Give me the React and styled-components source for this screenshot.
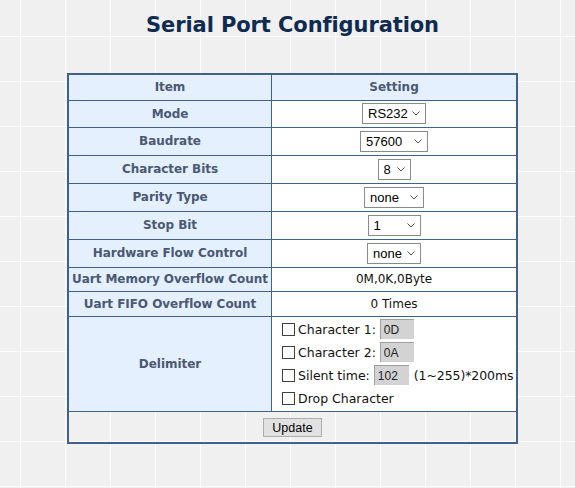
import React from "react";
import styled, { createGlobalStyle } from "styled-components";

const GlobalStyle = createGlobalStyle`
  html, body {
    margin: 0;
    padding: 0;
  }
  body {
    min-height: 488px;
    background-color: #f0f0f0;
    background-image:
      linear-gradient(to right, rgba(255, 255, 255, 0.85) 1px, transparent 1px),
      linear-gradient(to bottom, rgba(255, 255, 255, 0.85) 1px, transparent 1px);
    background-size: 45px 45px;
    background-position: 20px 36px;
    font-family: "DejaVu Sans", Verdana, sans-serif;
  }
`;

const Page = styled.div`
  width: 575px;
  box-sizing: border-box;
  padding: 11px 0 0 10px;
`;

const Title = styled.h1`
  margin: 0 0 34px;
  text-align: center;
  font-size: 21px;
  font-weight: bold;
  color: #0f2b50;
  line-height: 28px;
  letter-spacing: -0.1px;
`;

const Table = styled.table`
  width: 451px;
  margin: 0 auto;
  border-collapse: collapse;
  border: 2px solid #41618a;
`;

const Row = styled.tr`
  height: ${(p) => p.$h}px;
`;

const Label = styled.td`
  width: 202px;
  padding: 0;
  border: 1px solid #41618a;
  background: #e4f0fd;
  color: #4b5873;
  font-weight: bold;
  font-size: 12px;
  text-align: center;
  white-space: nowrap;
  letter-spacing: -0.05px;
`;

const Value = styled.td`
  padding: 0;
  border: 1px solid #41618a;
  background: ${(p) => (p.$head ? "#e4f0fd" : "#fff")};
  color: ${(p) => (p.$head ? "#4b5873" : "#111")};
  font-weight: ${(p) => (p.$head ? "bold" : "normal")};
  font-size: 12px;
  text-align: center;
  white-space: nowrap;
`;

const ButtonCell = styled.td`
  padding: 5px 0 0;
  border: 1px solid #41618a;
  text-align: center;
  vertical-align: top;
`;

const SelectWrap = styled.span`
  position: relative;
  display: inline-block;
  vertical-align: middle;
`;

const Select = styled.select`
  appearance: none;
  -webkit-appearance: none;
  width: ${(p) => p.$w}px;
  height: 21px;
  margin: 0;
  padding: 0 0 0 5px;
  border: 1px solid #8a8a8a;
  border-radius: 0;
  background: #fff;
  font-family: "Liberation Sans", Arial, sans-serif;
  font-size: 13px;
  color: #000;
  display: block;
`;

const Chevron = styled.svg`
  position: absolute;
  right: 6px;
  top: 8px;
  width: 8px;
  height: 5px;
  pointer-events: none;
`;

const Delims = styled.div`
  display: flex;
  flex-direction: column;
  gap: 2px;
  padding: 2px 0 2px 10px;
  text-align: left;
`;

const DelimLine = styled.label`
  display: flex;
  align-items: center;
  height: 21px;
  font-size: 12.5px;
  color: #111;
`;

const Check = styled.input`
  appearance: none;
  -webkit-appearance: none;
  width: 13px;
  height: 13px;
  margin: 0 3px 0 0;
  border: 1px solid #3f3f3f;
  background: #fff;
`;

const TextBox = styled.input`
  width: ${(p) => p.$w}px;
  height: 20px;
  box-sizing: border-box;
  margin-left: 4px;
  padding: 0 0 0 3px;
  border: none;
  border-top: 1px solid #a0a0a0;
  border-left: 1px solid #a0a0a0;
  background: #d3d3d3;
  font-family: "Liberation Sans", Arial, sans-serif;
  font-size: 12px;
  color: #222;
`;

const Hint = styled.span`
  margin-left: 5px;
  letter-spacing: -0.1px;
`;

const UpdateButton = styled.button`
  width: 59px;
  height: 19px;
  margin: 0;
  padding: 0;
  border: 1px solid #adadad;
  background: #e1e1e1;
  font-family: "Liberation Sans", Arial, sans-serif;
  font-size: 12.5px;
  color: #000;
`;

const Dropdown = ({ w, value, options }) => (
  <SelectWrap>
    <Select $w={w} defaultValue={value}>
      {options.map((o) => (
        <option key={o}>{o}</option>
      ))}
    </Select>
    <Chevron viewBox="0 0 8 5">
      <path d="M0.5 0.5 L4 4 L7.5 0.5" fill="none" stroke="#555" strokeWidth="1" />
    </Chevron>
  </SelectWrap>
);

const rows = [
  { label: "Mode", h: 27, w: 64, value: "RS232", options: ["RS232", "RS422", "RS485"] },
  { label: "Baudrate", h: 28, w: 68, value: "57600", options: ["9600", "19200", "38400", "57600", "115200"] },
  { label: "Character Bits", h: 28, w: 33, value: "8", options: ["7", "8"] },
  { label: "Parity Type", h: 28, w: 60, value: "none", options: ["none", "odd", "even"] },
  { label: "Stop Bit", h: 28, w: 53, value: "1", options: ["1", "2"] },
  { label: "Hardware Flow Control", h: 28, w: 54, value: "none", options: ["none", "rts/cts"] },
];

export default function App() {
  return (
    <>
      <GlobalStyle />
      <Page>
        <Title>Serial Port Configuration</Title>
        <Table>
          <tbody>
            <Row $h={26}>
              <Label>Item</Label>
              <Value $head>Setting</Value>
            </Row>
            {rows.map((r) => (
              <Row $h={r.h} key={r.label}>
                <Label>{r.label}</Label>
                <Value>
                  <Dropdown w={r.w} value={r.value} options={r.options} />
                </Value>
              </Row>
            ))}
            <Row $h={24}>
              <Label>Uart Memory Overflow Count</Label>
              <Value>0M,0K,0Byte</Value>
            </Row>
            <Row $h={25}>
              <Label>Uart FIFO Overflow Count</Label>
              <Value>0 Times</Value>
            </Row>
            <Row $h={94}>
              <Label>Delimiter</Label>
              <Value>
                <Delims>
                  <DelimLine>
                    <Check type="checkbox" />
                    Character 1:
                    <TextBox $w={34} defaultValue="0D" />
                  </DelimLine>
                  <DelimLine>
                    <Check type="checkbox" />
                    Character 2:
                    <TextBox $w={34} defaultValue="0A" />
                  </DelimLine>
                  <DelimLine>
                    <Check type="checkbox" />
                    Silent time:
                    <TextBox $w={35} defaultValue="102" />
                    <Hint>(1~255)*200ms</Hint>
                  </DelimLine>
                  <DelimLine>
                    <Check type="checkbox" />
                    Drop Character
                  </DelimLine>
                </Delims>
              </Value>
            </Row>
            <Row $h={32}>
              <ButtonCell colSpan={2}>
                <UpdateButton>Update</UpdateButton>
              </ButtonCell>
            </Row>
          </tbody>
        </Table>
      </Page>
    </>
  );
}
